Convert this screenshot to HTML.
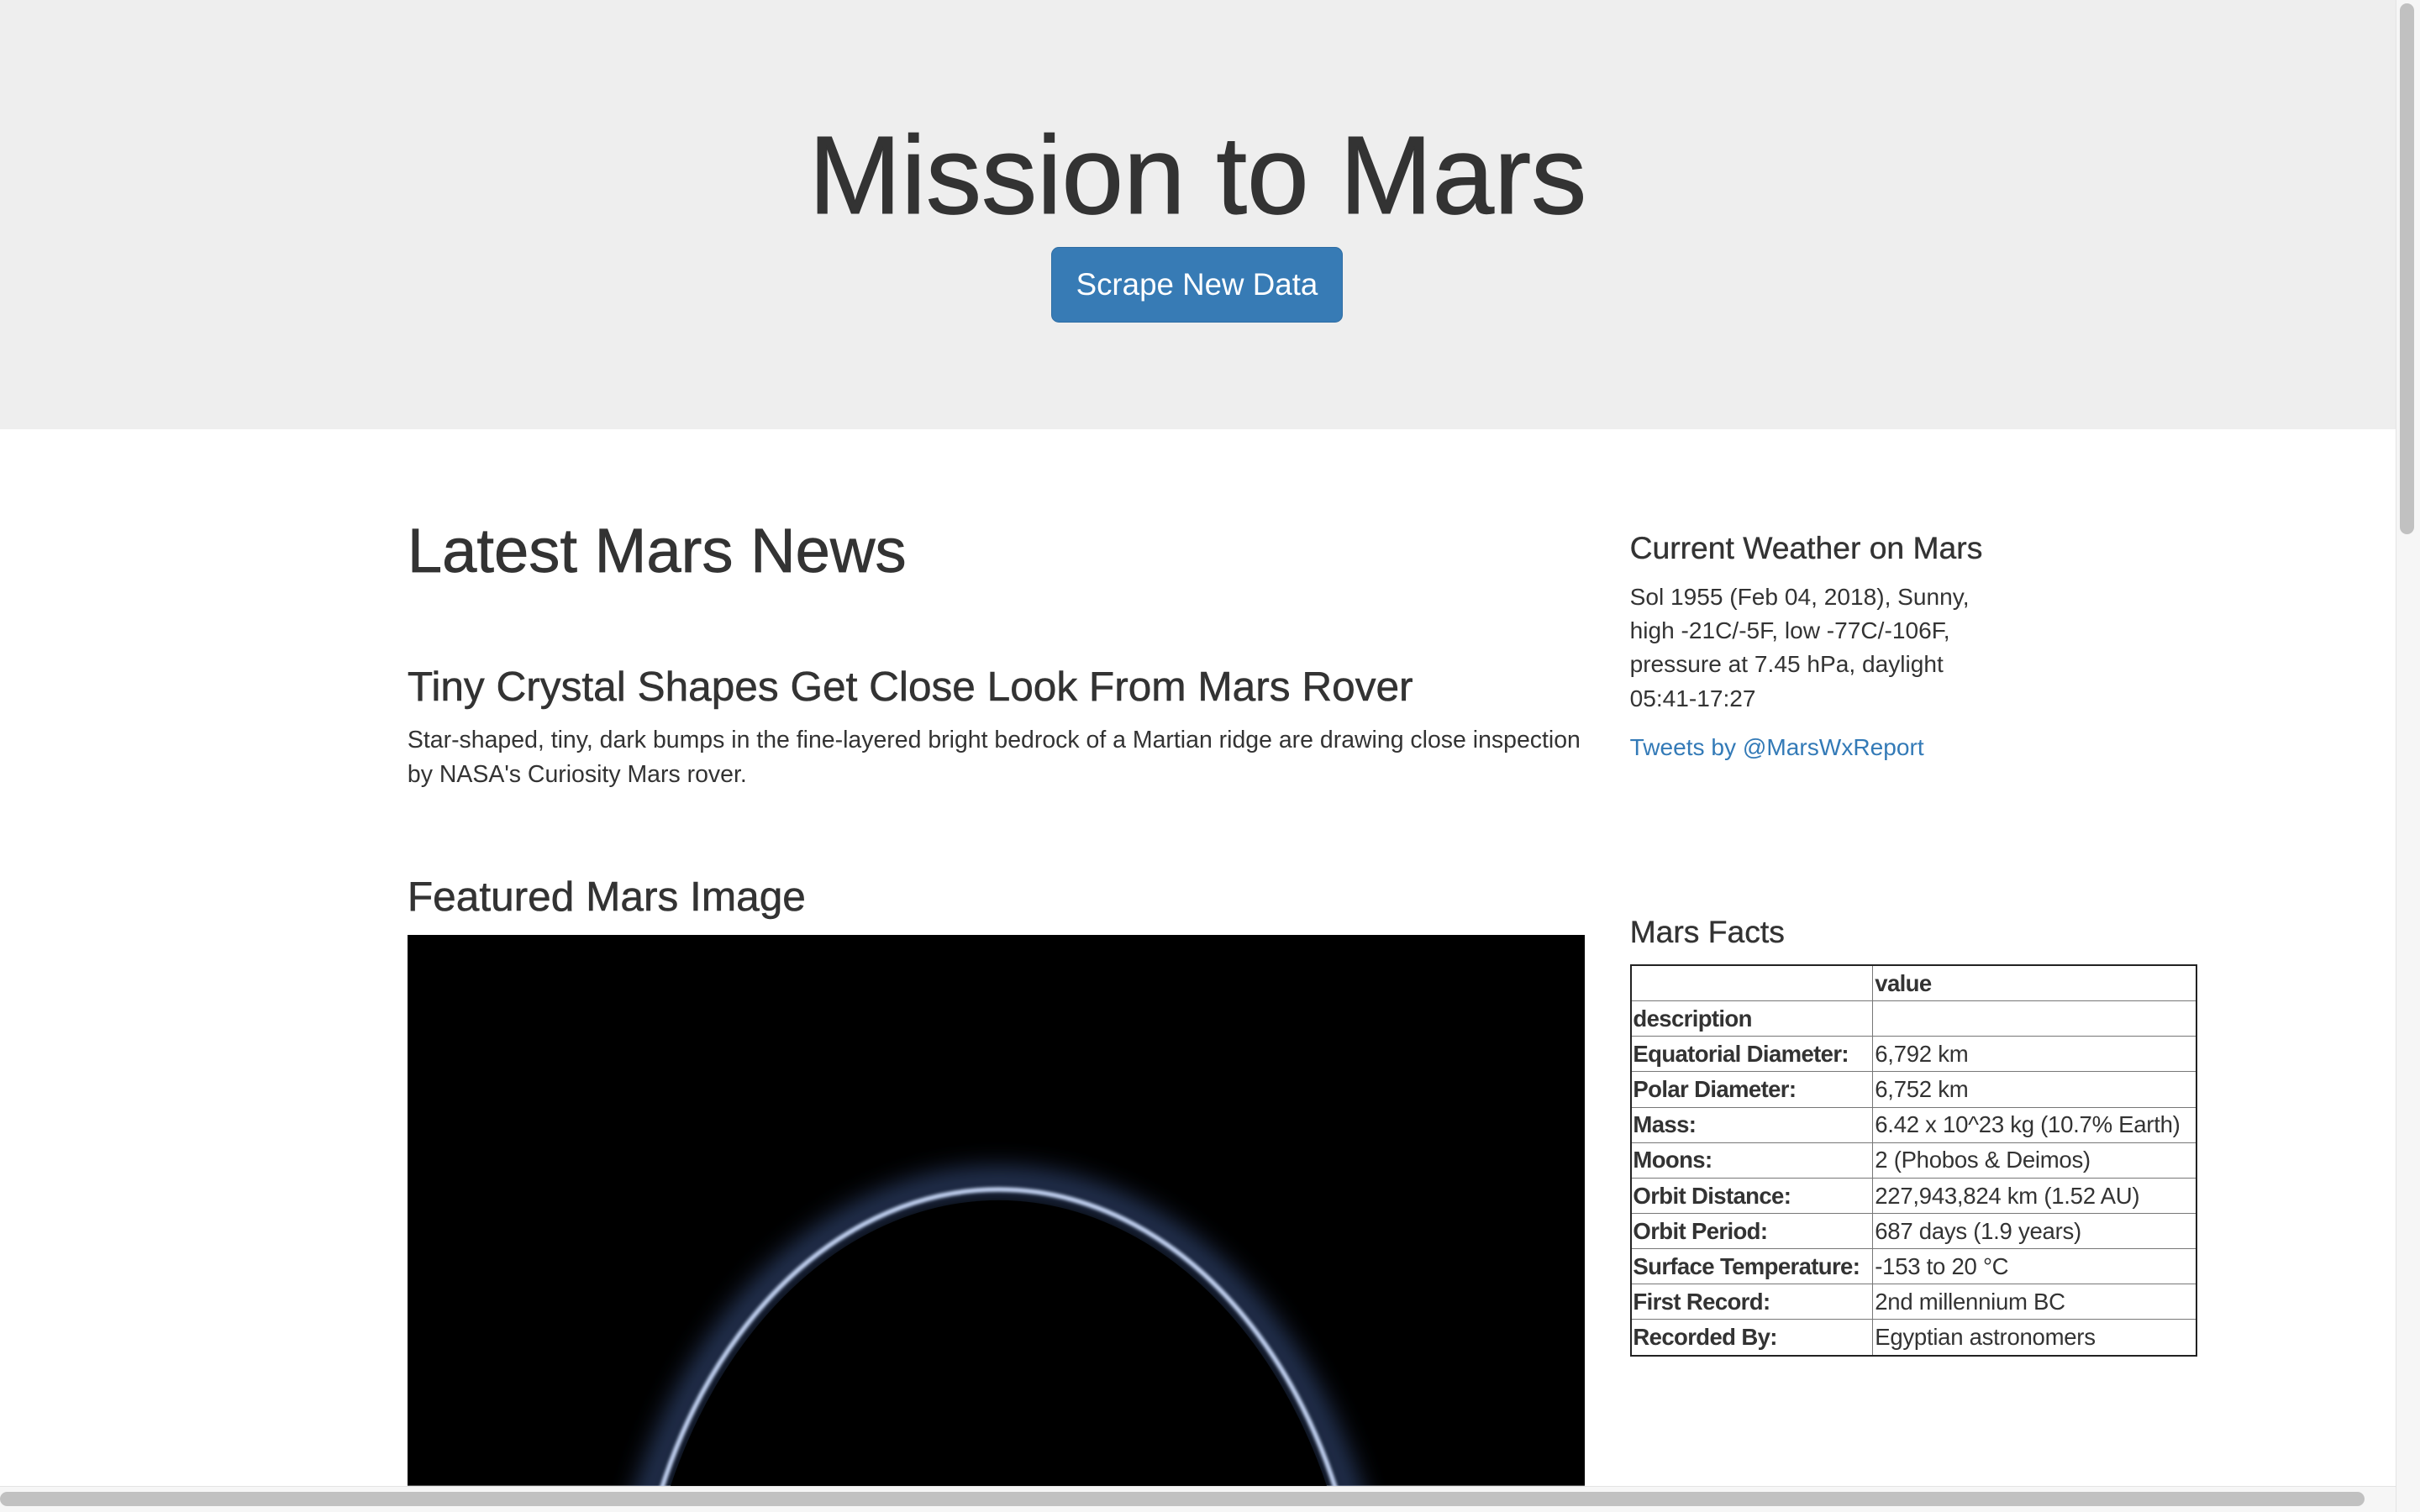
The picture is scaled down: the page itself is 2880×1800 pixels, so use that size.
<!DOCTYPE html>
<html><head><meta charset="utf-8"><style>
html,body{margin:0;padding:0;background:#fff;overflow:hidden}
#w{position:relative;width:1568px;height:980px;zoom:1.836735;font-family:"Liberation Sans",Arial,sans-serif;color:#333;overflow:hidden}
.a{position:absolute;white-space:nowrap;line-height:1}
table{position:absolute;left:1056px;top:625px;width:368px;border-collapse:collapse;border:1.5px solid #222;font-size:15px;letter-spacing:-0.15px;table-layout:fixed}
td,th{border:1px solid #777;height:22.4px;padding:0 1px;line-height:1;text-align:left;vertical-align:middle;white-space:nowrap;overflow:visible}
th{font-weight:bold;letter-spacing:-0.35px}
</style></head><body><div id="w">
<div style="position:absolute;left:0;top:0;width:1552px;height:278px;background:#eee"></div>
<div class="a" style="left:0;width:1552px;text-align:center;top:78px;font-size:72px;-webkit-text-stroke:0.6px #333">Mission to Mars</div>
<div style="position:absolute;left:681px;top:160px;width:188px;height:48px;background:#377bb5;border:1px solid #2e6da4;border-radius:5px;color:#fff;font-size:20px;display:flex;align-items:center;justify-content:center">Scrape New Data</div>

<div class="a" style="left:264px;top:337px;font-size:40.4px;-webkit-text-stroke:0.4px #333">Latest Mars News</div>
<div class="a" style="left:264px;top:432px;font-size:27px;-webkit-text-stroke:0.3px #333">Tiny Crystal Shapes Get Close Look From Mars Rover</div>
<div style="position:absolute;left:264px;top:469px;width:770px;font-size:15.5px;line-height:22px">Star-shaped, tiny, dark bumps in the fine-layered bright bedrock of a Martian ridge are drawing close inspection by NASA's Curiosity Mars rover.</div>
<div class="a" style="left:264px;top:568px;font-size:27px;-webkit-text-stroke:0.3px #333">Featured Mars Image</div>
<svg style="position:absolute;left:264px;top:606px" width="763" height="357" viewBox="0 0 763 357">
<defs><filter id="b" x="-50%" y="-50%" width="200%" height="200%"><feGaussianBlur stdDeviation="9"/></filter><filter id="c"><feGaussianBlur stdDeviation="1"/></filter></defs>
<rect width="763" height="357" fill="#000"/>
<ellipse cx="383" cy="494" rx="246" ry="334" fill="none" stroke="#4a68a8" stroke-width="14" filter="url(#b)" opacity=".7"/>
<ellipse cx="383" cy="487" rx="238" ry="322" fill="none" stroke="#c4d4f4" stroke-width="3" filter="url(#c)"/>
<ellipse cx="383" cy="490" rx="234" ry="318" fill="#000"/>
</svg>

<div class="a" style="left:1056px;top:345px;font-size:20.3px;-webkit-text-stroke:0.2px #333">Current Weather on Mars</div>
<div style="position:absolute;left:1056px;top:376px;font-size:15.3px;line-height:22px;white-space:nowrap">Sol 1955 (Feb 04, 2018), Sunny,<br>high -21C/-5F, low -77C/-106F,<br>pressure at 7.45 hPa, daylight<br>05:41-17:27</div>
<div class="a" style="left:1056px;top:477px;font-size:15.3px;color:#337ab7">Tweets by @MarsWxReport</div>
<div class="a" style="left:1056px;top:594px;font-size:20.3px;-webkit-text-stroke:0.2px #333">Mars Facts</div>
<table>
<colgroup><col style="width:157px"><col></colgroup>
<tr><th></th><th>value</th></tr>
<tr><th>description</th><td></td></tr>
<tr><th>Equatorial Diameter:</th><td>6,792 km</td></tr>
<tr><th>Polar Diameter:</th><td>6,752 km</td></tr>
<tr><th>Mass:</th><td>6.42 x 10^23 kg (10.7% Earth)</td></tr>
<tr><th>Moons:</th><td>2 (Phobos &amp; Deimos)</td></tr>
<tr><th>Orbit Distance:</th><td>227,943,824 km (1.52 AU)</td></tr>
<tr><th>Orbit Period:</th><td>687 days (1.9 years)</td></tr>
<tr><th>Surface Temperature:</th><td>-153 to 20 °C</td></tr>
<tr><th>First Record:</th><td>2nd millennium BC</td></tr>
<tr><th>Recorded By:</th><td>Egyptian astronomers</td></tr>
</table>

<div style="position:absolute;left:1552px;top:0;width:16px;height:980px;background:#f6f6f6;border-left:1px solid #e4e4e4"></div>
<div style="position:absolute;left:1555px;top:2px;width:9px;height:344px;background:#c1c1c1;border-radius:5px"></div>
<div style="position:absolute;left:0;top:963px;width:1552px;height:17px;background:#f6f6f6;border-top:1px solid #e4e4e4"></div>
<div style="position:absolute;left:0;top:967px;width:1532px;height:9px;background:#c1c1c1;border-radius:5px"></div>
</div></body></html>
